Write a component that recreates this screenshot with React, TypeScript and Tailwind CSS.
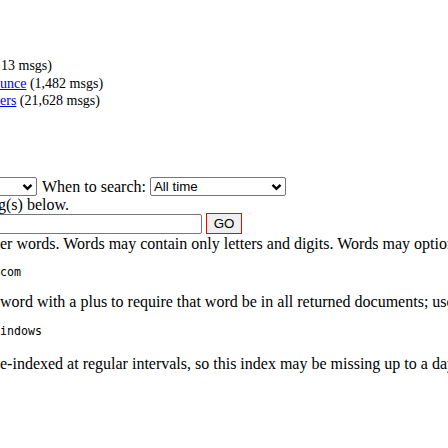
import React from "react";

function Chevron() {
  return (
    <svg width="11" height="8" viewBox="0 0 11 8" className="shrink-0">
      <polyline points="1.5,1.8 5.5,5.8 9.5,1.8" fill="none" stroke="#000" strokeWidth="2.4" />
    </svg>
  );
}

export default function App() {
  return (
    <div className="w-[448px] h-[448px] overflow-hidden bg-white text-black font-['Liberation_Serif',serif] text-[16px] leading-[18px] whitespace-nowrap">
      <div className="h-[57px]" />
      <div className="h-[17.5px] leading-[17.5px] text-[14px] pl-[1px]">13 msgs)</div>
      <div className="h-[17.5px] leading-[17.5px] text-[14px]">
        <a className="text-[#0000ee] underline">unce</a> (1,482 msgs)
      </div>
      <div className="h-[17.5px] leading-[17.5px] text-[14px]">
        <a className="text-[#0000ee] underline">ers</a> (21,628 msgs)
      </div>
      <div className="h-[67.5px]" />
      <div className="flex items-center h-[19px]">
        <div className="-ml-[4px] w-[41px] h-[19px] border border-[#767676] rounded-[2px] flex items-center justify-end pr-[3px] shrink-0">
          <Chevron />
        </div>
        <span className="ml-[5px] text-[16px] leading-[19px]">When to search:</span>
        <div className="ml-[4px] w-[136px] h-[19px] border border-[#767676] rounded-[2px] flex items-center justify-between pl-[3px] pr-[3px] shrink-0 font-['Liberation_Sans',sans-serif] text-[13.33px]">
          <span>All time</span>
          <Chevron />
        </div>
      </div>
      <div className="h-[17px] leading-[17px] -ml-[2px]">g(s) below.</div>
      <div className="flex items-start h-[21px]">
        <div className="-ml-[4px] w-[206px] h-[20px] mt-[1px] border border-[#767676] rounded-[2px] shrink-0" />
        <div className="ml-[4px] w-[36px] h-[21px] border-[1.5px] border-[#ff0000] bg-[#efefef] flex items-center justify-center font-['Liberation_Sans',sans-serif] text-[13.33px] shrink-0">
          GO
        </div>
      </div>
      <div className="mt-[1px] h-[18px] leading-[18px]">
        er words. Words may contain only letters and digits. Words may optionally be preceded
      </div>
      <div className="mt-[12px] h-[15px] leading-[15px] font-['DejaVu_Sans_Mono',monospace] text-[11.6px]">com</div>
      <div className="mt-[13px] h-[18px] leading-[18px]">
        word with a plus to require that word be in all returned documents; use a minus
      </div>
      <div className="mt-[13px] h-[15px] leading-[15px] font-['DejaVu_Sans_Mono',monospace] text-[11.6px]">indows</div>
      <div className="mt-[16px] h-[18px] leading-[18px]">
        e-indexed at regular intervals, so this index may be missing up to a day of messages
      </div>
    </div>
  );
}
